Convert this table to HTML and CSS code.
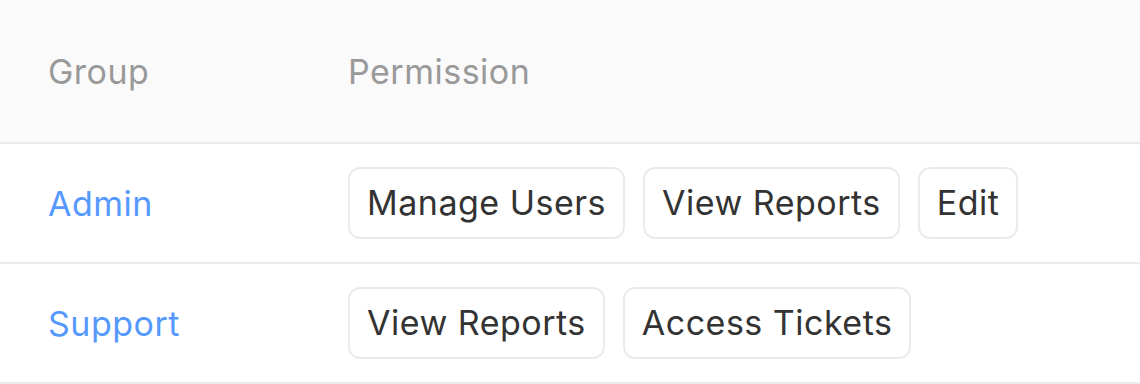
FILE: index.html
```html
<!DOCTYPE html>
<html lang="en">
<head>
    <meta charset="UTF-8">
    <meta name="viewport" content="width=device-width, initial-scale=1.0">
    <title>Group permissions</title>
    <link rel="stylesheet" href="styles.css">
</head>
<body>
    <table class="perm-table">
        <thead>
            <tr>
                <th class="col-group">Group</th>
                <th>Permission</th>
            </tr>
        </thead>
        <tbody>
            <tr>
                <td class="col-group"><a href="#" class="group-link">Admin</a></td>
                <td>
                    <div class="tags">
                        <span class="tag">Manage Users</span>
                        <span class="tag">View Reports</span>
                        <span class="tag">Edit</span>
                    </div>
                </td>
            </tr>
            <tr>
                <td class="col-group"><a href="#" class="group-link">Support</a></td>
                <td>
                    <div class="tags">
                        <span class="tag">View Reports</span>
                        <span class="tag">Access Tickets</span>
                    </div>
                </td>
            </tr>
        </tbody>
    </table>
</body>
</html>
```

FILE: styles.css
```css
body {
    font-family: Inter, "Noto Sans", sans-serif;
    margin: 0;
    background: #fff;
}
.perm-table {
    width: 100%;
    border-collapse: collapse;
    font-size: 34px;
    letter-spacing: 0.5px;
}
.perm-table th,
.perm-table td {
    text-align: left;
    padding: 0 0 0 48px;
    border-bottom: 2px solid #ebebeb;
    vertical-align: middle;
}
.perm-table th {
    height: 142px;
    background: #fafafa;
    color: #999;
    font-weight: 400;
}
.perm-table td {
    height: 118px;
}
.perm-table .col-group {
    width: 252px;
}
.group-link {
    color: #5599ff;
    text-decoration: none;
}
.tags {
    display: flex;
    gap: 18px;
}
.tag {
    display: inline-block;
    border: 2px solid #ebebeb;
    border-radius: 12px;
    padding: 10px 17px;
    line-height: 48px;
    color: #333;
}
```
